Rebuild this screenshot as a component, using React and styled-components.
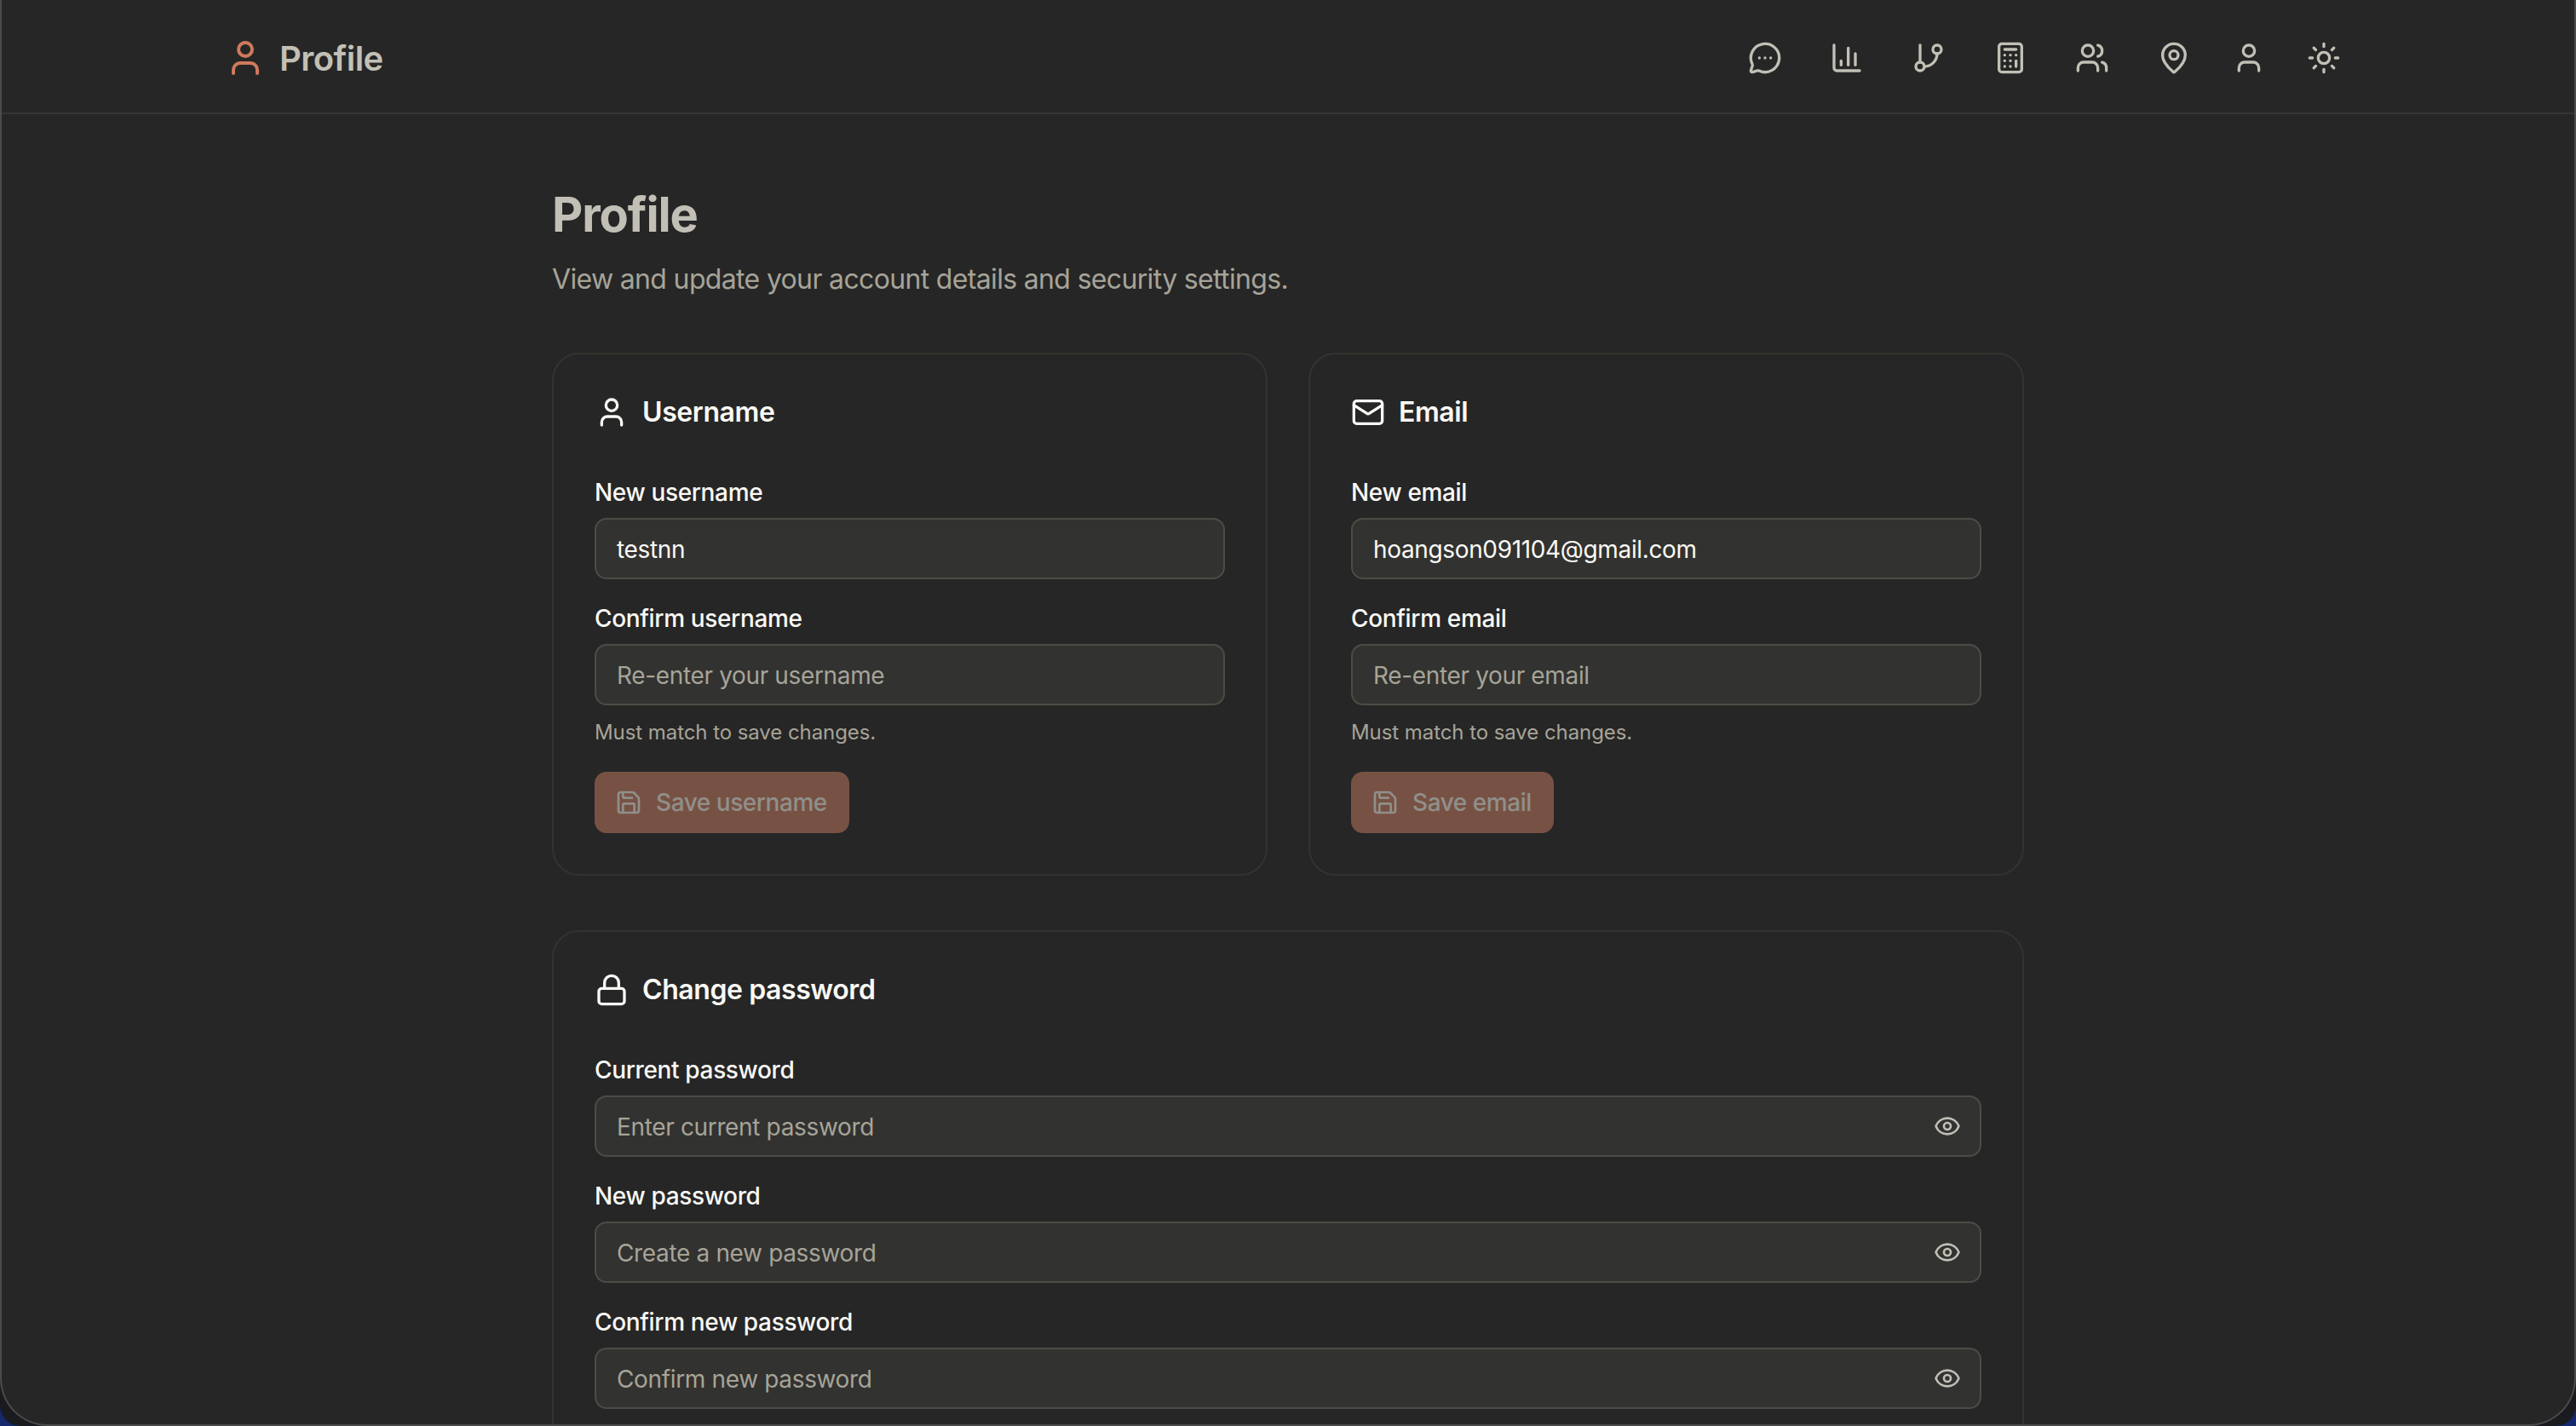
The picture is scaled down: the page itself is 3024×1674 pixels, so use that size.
import React from 'react';
import styled, { createGlobalStyle } from 'styled-components';
import {
	Calculator,
	ChartColumn,
	Eye,
	GitBranch,
	Lock,
	Mail,
	MapPin,
	MessageCircleMore,
	Save,
	Sun,
	User,
	Users,
} from 'lucide-react';

const GlobalStyle = createGlobalStyle`
	* {
		box-sizing: border-box;
	}

	html,
	body {
		margin: 0;
		height: 100%;
		background: #16296f;
		font-family: Inter, 'Noto Sans', sans-serif;
	}
`;

// Styled Components
const Shadow = styled.div`
	height: 100vh;
	background: #1a1b1e;
	border-radius: 0 0 24px 24px;
	overflow: hidden;
`;

const Window = styled.div`
	height: 100%;
	background: #262626;
	border: 2px solid #4b4b4b;
	border-top: 0;
	border-radius: 0 0 56px 56px;
	overflow: hidden;
`;

const Header = styled.header`
	height: 134px;
	padding: 4px 262px 0;
	display: flex;
	align-items: center;
	justify-content: space-between;
	border-bottom: 2px solid #353531;
`;

const Brand = styled.div`
	display: flex;
	align-items: center;
	gap: 16px;
	color: #cf7a5c;
`;

const BrandName = styled.span`
	font-size: 40px;
	font-weight: 600;
	letter-spacing: -0.55px;
	color: #c2c0b6;
`;

const Nav = styled.nav`
	display: flex;
	align-items: center;
	gap: ${(props) => props.$gap}px;
`;

const NavButton = styled.button`
	display: flex;
	padding: 12px;
	border: 0;
	background: none;
	color: #c2c0b6;
`;

const Main = styled.main`
	width: 1728px;
	margin: 0 auto;
	padding-top: 82px;
`;

const Title = styled.h1`
	margin: 0;
	font-size: 56px;
	line-height: 72px;
	font-weight: 700;
	letter-spacing: -1.1px;
	color: #c2c0b6;
`;

const Subtitle = styled.p`
	margin: 16px 0 0;
	font-size: 32px;
	line-height: 48px;
	letter-spacing: -0.66px;
	color: #a6a498;
`;

const CardGrid = styled.div`
	margin-top: 62px;
	display: grid;
	grid-template-columns: 1fr 1fr;
	gap: 48px;
`;

const Card = styled.section`
	margin-top: ${(props) => props.$top || 0}px;
	padding: 48px;
	border: 2px solid #33332f;
	border-radius: 32px;
`;

const CardTitle = styled.h2`
	margin: 0 0 54px;
	display: flex;
	align-items: center;
	gap: 16px;
	font-size: 32px;
	line-height: 40px;
	font-weight: 600;
	letter-spacing: -0.42px;
	color: #faf9f5;

	svg {
		flex-shrink: 0;
	}
`;

const Field = styled.div`
	margin-top: 26px;

	&:first-of-type {
		margin-top: 0;
	}
`;

const Label = styled.label`
	display: block;
	margin-bottom: 10px;
	font-size: 28px;
	line-height: 40px;
	font-weight: 500;
	letter-spacing: -0.35px;
	color: #faf9f5;
`;

const InputWrap = styled.div`
	position: relative;
`;

const Input = styled.input`
	display: block;
	width: 100%;
	height: 72px;
	padding: 2px 24px 0;
	background: #323230;
	border: 2px solid #4c4c46;
	border-radius: 14px;
	outline: none;
	font-family: inherit;
	font-size: 28px;
	letter-spacing: -0.35px;
	color: #faf9f5;

	&::placeholder {
		color: #a6a498;
		opacity: 1;
	}
`;

const EyeButton = styled.button`
	position: absolute;
	top: 20px;
	right: 24px;
	display: flex;
	padding: 0;
	border: 0;
	background: none;
	color: #c2c0b6;
`;

const Hint = styled.p`
	margin: 16px 0 0;
	font-size: 24px;
	line-height: 32px;
	letter-spacing: -0.07px;
	color: #a6a498;
`;

const SaveButton = styled.button`
	margin-top: 30px;
	height: 72px;
	padding: 0 26px 0 24px;
	display: inline-flex;
	align-items: center;
	gap: 16px;
	background: #775244;
	border: 0;
	border-radius: 14px;
	font-family: inherit;
	font-size: 28px;
	font-weight: 500;
	letter-spacing: -0.45px;
	color: #918f8a;
`;

const navMain = [MessageCircleMore, ChartColumn, GitBranch, Calculator, Users, MapPin];
const navExtra = [User, Sun];

const passwordFields = [
	{ label: 'Current password', placeholder: 'Enter current password' },
	{ label: 'New password', placeholder: 'Create a new password' },
	{ label: 'Confirm new password', placeholder: 'Confirm new password' },
];

const ChangeForm = ({ icon: Icon, title, name, value }) => (
	<Card>
		<CardTitle>
			<Icon size={40} />
			{title}
		</CardTitle>
		<Field>
			<Label>New {name}</Label>
			<Input type="text" value={value} readOnly />
		</Field>
		<Field>
			<Label>Confirm {name}</Label>
			<Input type="text" placeholder={`Re-enter your ${name}`} />
		</Field>
		<Hint>Must match to save changes.</Hint>
		<SaveButton disabled>
			<Save size={32} />
			Save {name}
		</SaveButton>
	</Card>
);

export default function App() {
	return (
		<>
			<GlobalStyle />
			<Shadow>
				<Window>
					<Header>
						<Brand>
							<User size={48} />
							<BrandName>Profile</BrandName>
						</Brand>
						<Nav $gap={24}>
							<Nav $gap={32}>
								{navMain.map((Icon, i) => (
									<NavButton key={i}>
										<Icon size={40} />
									</NavButton>
								))}
							</Nav>
							{navExtra.map((Icon, i) => (
								<NavButton key={i}>
									<Icon size={40} />
								</NavButton>
							))}
						</Nav>
					</Header>
					<Main>
						<Title>Profile</Title>
						<Subtitle>View and update your account details and security settings.</Subtitle>
						<CardGrid>
							<ChangeForm icon={User} title="Username" name="username" value="testnn" />
							<ChangeForm icon={Mail} title="Email" name="email" value="hoangson091104@gmail.com" />
						</CardGrid>
						<Card $top={64}>
							<CardTitle>
								<Lock size={40} />
								Change password
							</CardTitle>
							{passwordFields.map((field) => (
								<Field key={field.label}>
									<Label>{field.label}</Label>
									<InputWrap>
										<Input type="password" placeholder={field.placeholder} />
										<EyeButton>
											<Eye size={32} />
										</EyeButton>
									</InputWrap>
								</Field>
							))}
						</Card>
					</Main>
				</Window>
			</Shadow>
		</>
	);
}
